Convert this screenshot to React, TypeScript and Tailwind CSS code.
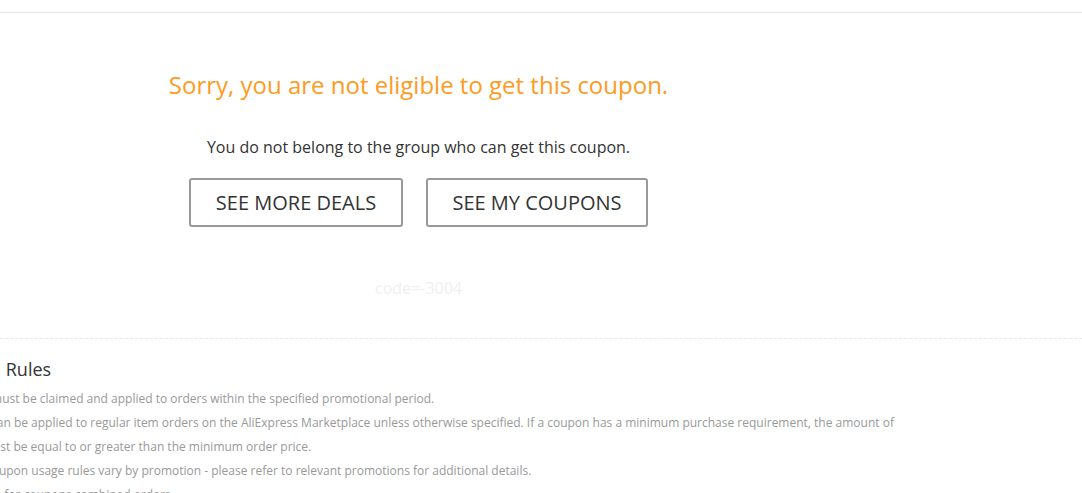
import React from "react"

const rules = [
    { text: "1. Coupons must be claimed and applied to orders within the specified promotional period.", indent: "pl-[6px]" },
    { text: "2. Coupons can be applied to regular item orders on the AliExpress Marketplace unless otherwise specified. If a coupon has a minimum purchase requirement, the amount of", indent: "pl-[6px]" },
    { text: "your order must be equal to or greater than the minimum order price.", indent: "pl-0" },
    { text: "3. Coupon usage rules vary by promotion - please refer to relevant promotions for additional details.", indent: "pl-[52px]" },
    { text: "4. Not eligible for coupons combined orders.", indent: "pl-[6px]" },
]

export default function App() {
    return (
        <div className="w-[1082px] h-[493px] overflow-hidden bg-white font-['Open_Sans',sans-serif]">
            <div className="h-3" />
            <div className="border-t border-[#e5e5e5]" />

            {/* result panel */}
            <div className="w-[837px] flex flex-col items-center text-center">
                <h1 className="mt-[56px] text-[24px] leading-[32px] text-[#ff9a22]">
                    Sorry, you are not eligible to get this coupon.
                </h1>
                <p className="mt-[35px] text-[16px] leading-[22px] text-[#333]">
                    You do not belong to the group who can get this coupon.
                </p>
                <div className="mt-[20px] flex gap-[23px]">
                    <button className="w-[214px] h-[49px] border-2 border-[#999] rounded-[3px] text-[20px] text-[#333] bg-white">
                        SEE MORE DEALS
                    </button>
                    <button className="w-[222px] h-[49px] border-2 border-[#999] rounded-[3px] text-[20px] text-[#333] bg-white">
                        SEE MY COUPONS
                    </button>
                </div>
                <p className="mt-[50px] text-[16px] leading-[22px] text-[#f0f0f0]">code=-3004</p>
            </div>

            <div className="mt-[39px] border-t border-dashed border-[#e8e8e8]" />

            {/* rules */}
            <div className="ml-[-81px] pt-[17px]">
                <h2 className="pl-[16px] text-[18px] leading-[26px] text-[#333]">Coupon Rules</h2>
                <ul className="mt-[5px] text-[12px] leading-[24px] text-[#999]">
                    {rules.map((r) => (
                        <li key={r.text} className={`whitespace-nowrap ${r.indent}`}>{r.text}</li>
                    ))}
                </ul>
            </div>
        </div>
    )
}
